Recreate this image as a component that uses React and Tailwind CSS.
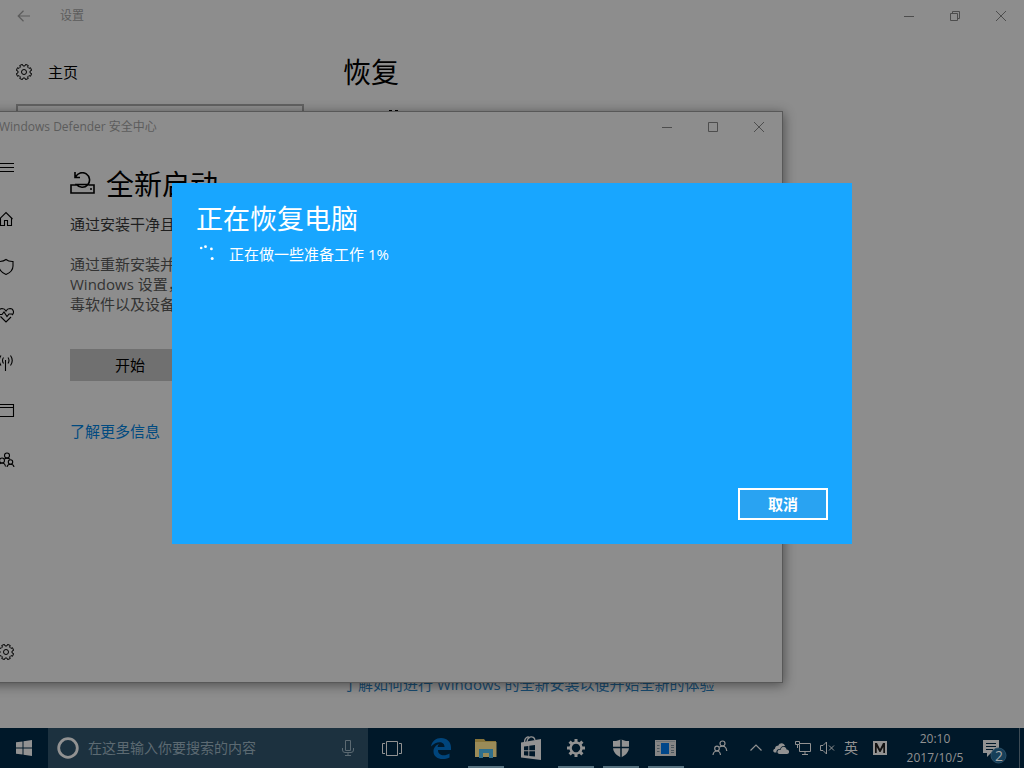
import React from "react";

const stroke = { fill: "none", stroke: "currentColor" };

function gearPath(teeth, rOut, rIn, c) {
  const step = (Math.PI * 2) / teeth;
  const at = (r, a) => `${(c + r * Math.sin(a)).toFixed(2)} ${(c - r * Math.cos(a)).toFixed(2)}`;
  let d = "";
  for (let i = 0; i < teeth; i++) {
    const a = (i + 0.5) * step;
    d += `${i ? "L" : "M"}${at(rIn, a - step * 0.3)}L${at(rOut, a - step * 0.24)}L${at(rOut, a + step * 0.24)}L${at(rIn, a + step * 0.3)}`;
  }
  return d + "Z";
}

const GearOutline = () => (
  <svg width="16" height="16" viewBox="1 1 16 16" {...stroke} strokeLinejoin="round">
    <path d={gearPath(8, 7.8, 6.1, 9)} />
    <circle cx="9" cy="9" r="2.5" />
  </svg>
);

const Minimize = () => (
  <svg width="10" height="10" {...stroke}><path d="M0 5.5H10" /></svg>
);
const Maximize = () => (
  <svg width="10" height="10" {...stroke}><path d="M.5 .5H9.5V9.5H.5Z" /></svg>
);
const Restore = () => (
  <svg width="10" height="10" {...stroke}><path d="M.5 2.5H7.5V9.5H.5ZM2.5 2.5V.5H9.5V7.5H7.5" /></svg>
);
const Close = () => (
  <svg width="10" height="10" {...stroke}><path d="M0 0L10 10M10 0L0 10" /></svg>
);

function CaptionButtons({ restored }) {
  const items = [
    ["最小化", <Minimize />],
    [restored ? "最大化" : "还原", restored ? <Maximize /> : <Restore />],
    ["关闭", <Close />],
  ];
  return (
    <div className="flex self-stretch text-[#4d4d4d]">
      {items.map(([label, icon]) => (
        <button key={label} aria-label={label} className="flex w-[46px] items-center justify-center">{icon}</button>
      ))}
    </div>
  );
}

function SettingsWindow() {
  return (
    <section className="absolute inset-0 flex flex-col overflow-hidden bg-[#8d8d8d] text-black">
      <header className="flex h-8 shrink-0 items-center text-xs text-[#5c5c5c]">
        <button aria-label="返回" className="flex w-12 justify-center">
          <svg width="14" height="12" {...stroke} strokeWidth="1.2"><path d="M13 6H1M6.500 .8L1.200 6L6.500 11.200" /></svg>
        </button>
        <span className="ml-3 flex-1">设置</span>
        <CaptionButtons />
      </header>
      <div className="flex flex-1">
        <nav className="flex w-80 shrink-0 flex-col px-4 pt-4">
          <a href="#home" className="flex h-12 items-center gap-4 text-[15px]"><GearOutline />主页</a>
          <input aria-label="查找设置" className="mt-2 h-9 w-72 border-2 border-[#626262] bg-transparent" />
        </nav>
        <main className="flex flex-1 flex-col pl-[23px] pt-5">
          <h1 className="text-[28px] leading-10">恢复</h1>
          <svg width="12" height="3" className="ml-[45px] mt-[17px]" fill="currentColor"><path d="M1 1h3v2h-3zM7 1h3v2h-3z" /></svg>
          <a href="#fresh" className="mb-[33px] mt-auto text-[15px] leading-[22px] text-[#184b70]">了解如何进行 Windows 的全新安装以便开始全新的体验</a>
        </main>
      </div>
    </section>
  );
}

const navIcons = [
  ["主页", <path d="M2.500 9L9 2.500L15.500 9M3.500 8V15.500H7.500V10.500H10.500V15.500H14.500V8" />],
  ["病毒和威胁防护", <path d="M9 1.500C7 3.200 4.500 3.600 2 3.500V8C2 12 5 14.800 9 16.500C13 14.800 16 12 16 8V3.500C13.500 3.600 11 3.200 9 1.500Z" />],
  ["设备性能和运行状况", <path d="M2.500 9C1 6.500 1.500 2.700 5 2.500C7 2.500 8.200 3.500 9 5C9.800 3.500 11 2.500 13 2.500C16.800 2.700 17.500 7 15 9.200M1.500 8.500H5L7 6L10 10.500L12 8H15.500M3.500 10.500L9 16L14 11" />],
  ["防火墙和网络保护", <path d="M8.500 6V17M6.500 3.500Q4.500 6.500 6.500 9.500M11 3.500Q13 6.500 11 9.500M4 1.500Q.5 6.500 4 11.500M13.500 1.500Q17 6.500 13.500 11.500" />],
  ["应用和浏览器控制", <path d="M.5 2.500H16.500V14.500H.5ZM.5 5.500H16.500" />],
  ["家庭选项", <g><circle cx="10" cy="5.500" r="2.500" /><circle cx="5" cy="10.500" r="2.500" /><circle cx="13.500" cy="12" r="2.200" /><path d="M1.500 16.500Q2 13 5 13Q8 13 8.500 16.500M10 17Q10.500 14.200 13.500 14.200Q16.500 14.200 17 17M7.500 9Q10 7 13 9.300" /></g>],
];

function DefenderWindow() {
  return (
    <section className="absolute -left-[18px] bottom-[45px] top-[111px] flex w-[801px] flex-col border border-[#585858] bg-[#8d8d8d] text-black shadow-[1px_2px_11px_0px_rgba(0,0,0,0.45)]">
      <header className="flex h-[30px] shrink-0 items-center pl-4 text-xs text-[#5c5c5c]">
        <span className="flex-1">Windows Defender 安全中心</span>
        <CaptionButtons restored />
      </header>
      <div className="flex flex-1">
        <nav className="flex w-[46px] shrink-0 flex-col items-center pb-[6px] pt-px">
          <button aria-label="菜单" className="flex h-12 items-center justify-center">
            <svg width="18" height="10" {...stroke}><path d="M1 1.500H17M1 5.500H17M1 9.500H17" /></svg>
          </button>
          <div className="mt-1 flex flex-col">
            {navIcons.map(([label, shape]) => (
              <a key={label} href="#section" aria-label={label} className="flex h-12 items-center justify-center">
                <svg width="18" height="18" viewBox="0 0 18 18" {...stroke} strokeWidth="1.100">{shape}</svg>
              </a>
            ))}
          </div>
          <a href="#settings" aria-label="设置" className="mt-auto flex h-12 items-center justify-center"><GearOutline /></a>
        </nav>
        <main className="flex flex-col items-start pl-[41px] pt-[22px] text-[15px] leading-5 text-[#1f1f1f]">
          <h1 className="flex h-10 items-center gap-[11px] text-[28px] leading-10 text-black">
            <svg width="25" height="24" viewBox="0 0 25 24" {...stroke} strokeWidth="1.600">
              <path d="M6.500 13H1V21H24V13H18.500M5 0V5.500H10M5.600 5A7.300 7.300 0 1 1 6.500 12.500H18" />
              <path d="M20 17H22" />
            </svg>
            全新启动
          </h1>
          <p className="mt-[10px]">通过安装干净且</p>
          <p className="mt-5 text-[#333]">通过重新安装并<br />Windows 设置，<br />毒软件以及设备</p>
          <button className="mt-[35px] h-8 w-[120px] bg-[#707070] text-black">开始</button>
          <a href="#more" className="mt-10 text-[#004a80]">了解更多信息</a>
        </main>
      </div>
    </section>
  );
}

function RestoreDialog() {
  return (
    <div className="absolute inset-0 flex items-center justify-center pb-0.5">
      <div role="dialog" aria-labelledby="dialog-title" className="flex min-h-[361px] w-[680px] flex-col bg-[#18a6ff] p-6 text-white">
        <h2 id="dialog-title" className="-mt-2 text-[27px] leading-10">正在恢复电脑</h2>
        <div className="mt-[3px] flex items-center text-[15px] leading-6">
          <svg width="18" height="24" fill="currentColor" className="mr-[15px]">
            <circle cx="5.200" cy="6" r="1.300" /><circle cx="9.500" cy="4.700" r="1.400" /><circle cx="15.400" cy="6.900" r="1.400" /><circle cx="16.200" cy="16.500" r="1.500" />
          </svg>
          正在做一些准备工作 1%
        </div>
        <button className="mt-auto h-8 w-[90px] self-end border-2 border-white bg-[#29a3f2] text-[15px] font-bold leading-5">取消</button>
      </div>
    </div>
  );
}

const apps = [
  ["Microsoft Edge", false, (
    <path fill="#00457c" d="M2 10.500C3 5 7 2 12 2C18 2 22 6 22 11.500V14H9C9 20 16 20.500 20.500 17.500V21.500C13 25 4.500 22.500 4.500 15.500C4.500 11.500 7 9 10 8C9 9 8.700 10 8.700 11H15.500C15.500 4.500 7 5 2 10.500Z" />
  )],
  ["文件资源管理器", true, (
    <g><path fill="#87743a" d="M1 3H10L11.500 5H22V21H1Z" /><path fill="#9a8b58" d="M1 6H22.500V21H1Z" /><path fill="#2f6f8c" d="M5 13H19V22H15V17H9V22H5Z" /></g>
  )],
  ["应用商店", false, (
    <g><path {...stroke} strokeWidth="1.300" d="M5.500 6.500C5.500 1 9 0 11 2M8 6C8.500 0 15 -1 16 4" /><path fill="currentColor" d="M2 6.500L22 3V24L2 21.500Z" /><path fill="#001829" d="M5 10.500L9.300 10V14.300H5ZM10.300 9.800L16 9V14.300H10.300ZM5 15.300H9.300V19.700L5 19.200ZM10.300 15.300H16V20.600L10.300 19.900Z" /></g>
  )],
  ["设置", true, (
    <path fill="currentColor" fillRule="evenodd" d="M10.500 3H13.500V5.500L15.500 6.300L17.300 4.500L19.500 6.700L17.700 8.500L18.500 10.500H21V13.500H18.500L17.700 15.500L19.500 17.300L17.300 19.500L15.500 17.700L13.500 18.500V21H10.500V18.500L8.500 17.700L6.700 19.500L4.500 17.300L6.300 15.500L5.500 13.500H3V10.500H5.500L6.300 8.500L4.500 6.700L6.700 4.500L8.500 6.300L10.500 5.500ZM12 7.800a4.200 4.200 0 1 0 .01 0Z" />
  )],
  ["Windows Defender", true, (
    <g><path fill="currentColor" d="M12 3C9.500 4.700 7 5.200 4 5V11C4 16 7 19 12 21.500C17 19 20 16 20 11V5C17 5.200 14.500 4.700 12 3Z" /><path stroke="#001829" strokeWidth="1.500" d="M12 2V22M3 11.500H21" /></g>
  )],
  ["恢复", true, (
    <g><path fill="#858585" d="M1 4H22V20H1Z" /><path fill="#6c7275" d="M2 5H21V6H2Z" /><path fill="#00478a" d="M7 7H15V18H7Z" /><path stroke="#4d575d" d="M3 9.500H5.500M3 12.500H5.500M3 15.500H5.500M17 9.500H20M17 11.500H20M17 14.500H20M17 16.500H20" /></g>
  )],
];

function Taskbar() {
  return (
    <footer className="flex h-10 shrink-0 items-stretch bg-[#001829] text-[#929292]">
      <button aria-label="开始" className="flex w-12 items-center justify-center">
        <svg width="16" height="16" fill="currentColor"><path d="M0 2.300L6.500 1.400V7.500H0ZM7.500 1.200L16 0V7.500H7.500ZM0 8.500H6.500V14.600L0 13.700ZM7.500 8.500H16V16L7.500 14.800Z" /></svg>
      </button>
      <label className="flex w-80 items-center bg-[#1c313f] pl-2">
        <svg width="24" height="24" {...stroke} strokeWidth="2.800"><circle cx="12" cy="12" r="9.300" /></svg>
        <input aria-label="搜索" placeholder="在这里输入你要搜索的内容" className="ml-2 min-w-0 flex-1 bg-transparent text-sm outline-none placeholder:text-[#5c6a72]" />
        <svg width="12" height="18" className="mr-[14px] text-[#5c6a72]" {...stroke}><path d="M3.500 1.500H8.500V11.500H3.500ZM.5 9V11Q.5 13.500 3 13.500H9Q11.500 13.500 11.500 11V9M6 13.500V16M3 16.500H9" /></svg>
      </label>
      <button aria-label="任务视图" className="mr-0.5 flex w-12 items-center justify-center">
        <svg width="20" height="15" {...stroke}><path d="M4.500 .5H15.500V14.500H4.500ZM3 2.500H.5V12.500H3M17 2.500H19.500V12.500H17" /></svg>
      </button>
      {apps.map(([label, open, shape]) => (
        <button key={label} aria-label={label} className="flex w-[45px] flex-col items-center justify-end">
          <svg width="24" height="24" viewBox="0 0 24 24" className="mb-[6px]">{shape}</svg>
          <span className={open ? "h-0.5 w-9 bg-[#56717f]" : "h-0.5 w-9"} />
        </button>
      ))}
      <div className="ml-auto flex items-center">
        <button aria-label="人脉" className="flex w-12 justify-center">
          <svg width="16" height="16" {...stroke} strokeWidth="1.200"><circle cx="10.500" cy="3.500" r="2.500" /><circle cx="5" cy="8.500" r="2.300" /><path d="M1 15Q1.500 11 5 11Q8 11 8.500 15M7.500 7Q10 5.500 12.500 6.500Q14.500 7.800 14.800 11" /></svg>
        </button>
        <button aria-label="显示隐藏的图标" className="flex w-6 justify-center">
          <svg width="12" height="8" {...stroke} strokeWidth="1.200"><path d="M.5 6.500L6 1L11.500 6.500" /></svg>
        </button>
        <span className="flex w-[25px] justify-center">
          <svg width="16" height="11" fill="currentColor"><path d="M3.500 9.500H2.500C-.5 9.500-.3 6 2 5.700C2 3 4 2.300 5.200 2.800C6.500-.5 11-.5 12 3C9 2.500 7.500 4 7.200 6C4.500 5.800 3 7.500 3.500 9.500Z" /><path d="M6.500 11C3.700 11 3.900 7 6.500 6.800H7.800C8 2.800 13 2.800 13.500 6.500C16.800 6.300 16.800 11 14 11Z" /></svg>
        </span>
        <span className="flex w-5 justify-center">
          <svg width="16" height="14" {...stroke}><path d="M5 2.500H15.500V10.500H4.500V4M7 13.500H13M10 10.500V13.500M.5 .5H4.500V3.500H.5ZM2.500 3.500V7" /></svg>
        </span>
        <span className="flex w-7 justify-center">
          <svg width="15" height="14" {...stroke}><path d="M.5 4.500H3L6.500 1V13L3 9.500H.5ZM9 4.500L14 9.500M14 4.500L9 9.500" /></svg>
        </span>
        <span className="flex w-5 justify-center text-sm">英</span>
        <span className="flex w-[38px] justify-center">
          <svg width="16" height="16"><path fill="#929292" d="M1 1H15V15H1Z" /><path fill="#111" d="M3 13V3H5L8 9L11 3H13V13H11.300V7L8.500 12H7.500L4.700 7V13Z" /></svg>
        </span>
        <time className="w-[72px] text-center text-xs leading-[19px]">20:10<br />2017/10/5</time>
        <button aria-label="通知" className="relative flex h-10 w-12 items-start justify-center pt-3">
          <svg width="24" height="24">
            <path fill="currentColor" d="M0 0H16V13H8L4 17V13H0Z" /><path stroke="#001829" d="M3 3.500H13M3 6.500H13M3 9.500H10" />
            <circle cx="15.500" cy="15.500" r="7.500" fill="#163f59" stroke="#2b5068" />
          </svg>
          <span className="absolute right-4 top-5 text-sm leading-4 text-[#a8a8a8]">2</span>
        </button>
        <button aria-label="显示桌面" className="h-10 w-[5px] border-l border-[#3d4b55]" />
      </div>
    </footer>
  );
}

export default function App() {
  return (
    <div className="flex h-screen flex-col overflow-hidden font-['Open_Sans','Noto_Sans_CJK_SC',sans-serif]">
      <div className="relative flex-1">
        <SettingsWindow />
        <DefenderWindow />
        <RestoreDialog />
      </div>
      <Taskbar />
    </div>
  );
}
